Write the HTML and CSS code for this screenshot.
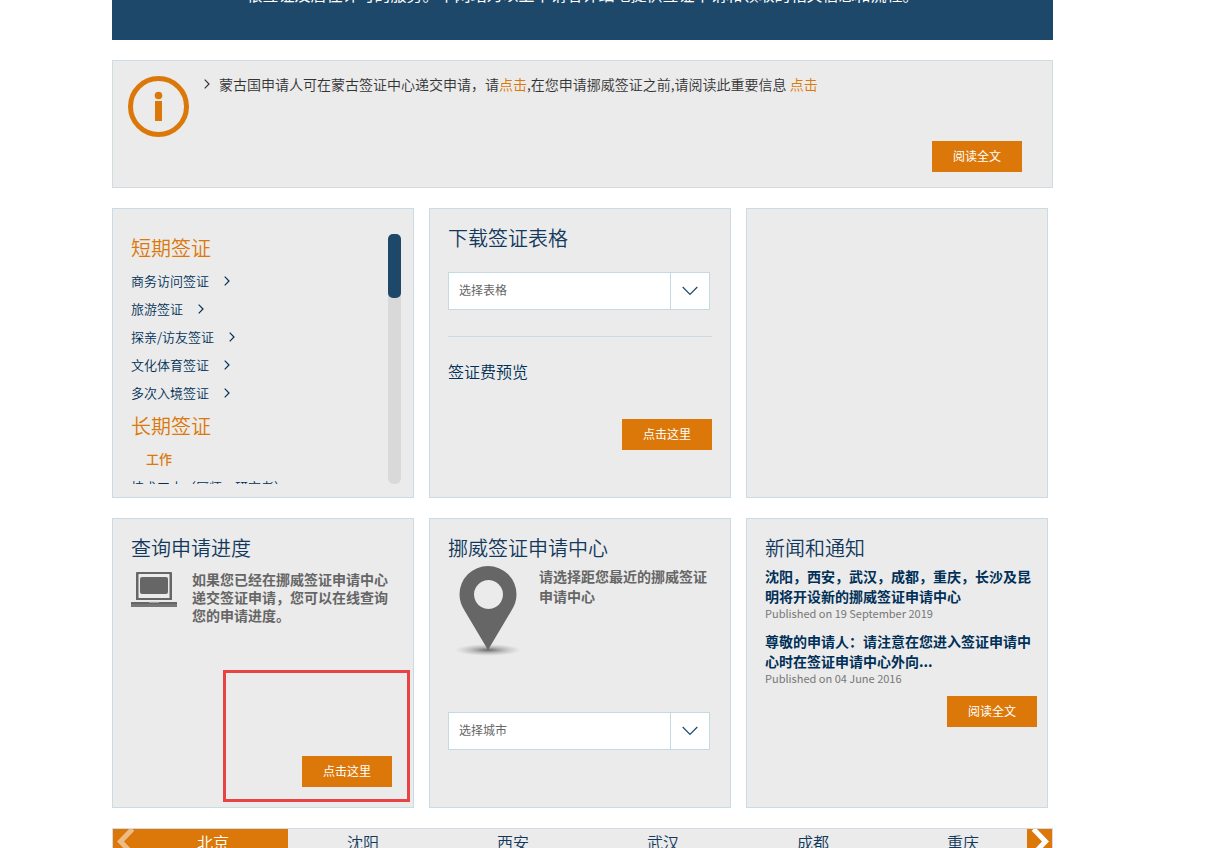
FILE: index.html
```html
<!DOCTYPE html>
<html lang="zh-CN">
<head>
<meta charset="utf-8">
<title>挪威签证申请中心</title>
<link rel="stylesheet" href="styles.css">
</head>
<body>
<main class="page">
  <section class="hero"><p class="hero-text">根签证及居住许可的服务。本网站为以上申请者详细地提供签证申请和领取的相关信息和流程。</p></section>

  <section class="notice">
    <svg class="notice-icon" viewBox="0 0 61 61" aria-hidden="true"><circle cx="30.5" cy="30.5" r="28" fill="none" stroke="#dc7809" stroke-width="5"/><circle cx="30.5" cy="19.5" r="3.8" fill="#dc7809"/><path d="M27 25h7v20h-7z" fill="#dc7809"/></svg>
    <div class="notice-body">
      <p class="notice-text"><svg class="chev" viewBox="0 0 6 10" aria-hidden="true"><path d="M.7.7 5 5 .7 9.300"/></svg><span>蒙古国申请人可在蒙古签证中心递交申请，请<a href="#">点击</a>,在您申请挪威签证之前,请阅读此重要信息 <a href="#">点击</a></span></p>
      <button class="btn" type="button">阅读全文</button>
    </div>
  </section>

  <div class="cards">
    <section class="card card-visas">
      <div class="visa-list">
        <h2 class="group">短期签证</h2>
        <a class="visa" href="#">商务访问签证<svg class="chev" viewBox="0 0 6 10" aria-hidden="true"><path d="M.7.7 5 5 .7 9.300"/></svg></a>
        <a class="visa" href="#">旅游签证<svg class="chev" viewBox="0 0 6 10" aria-hidden="true"><path d="M.7.7 5 5 .7 9.300"/></svg></a>
        <a class="visa" href="#">探亲/访友签证<svg class="chev" viewBox="0 0 6 10" aria-hidden="true"><path d="M.7.7 5 5 .7 9.300"/></svg></a>
        <a class="visa" href="#">文化体育签证<svg class="chev" viewBox="0 0 6 10" aria-hidden="true"><path d="M.7.7 5 5 .7 9.300"/></svg></a>
        <a class="visa" href="#">多次入境签证<svg class="chev" viewBox="0 0 6 10" aria-hidden="true"><path d="M.7.7 5 5 .7 9.300"/></svg></a>
        <h2 class="group">长期签证</h2>
        <h3 class="subgroup">工作</h3>
        <a class="visa" href="#">技术工人（厨师，研究者）</a>
      </div>
      <div class="track"><div class="thumb"></div></div>
    </section>

    <section class="card">
      <h2 class="title">下载签证表格</h2>
      <div class="picker picker-form">
        <select class="picker-select" aria-label="选择表格"><option>选择表格</option></select>
        <span class="picker-arrow"><svg viewBox="0 0 16 10" aria-hidden="true"><path d="M.7 1 8 8.500 15.300 1"/></svg></span>
      </div>
      <h3 class="fee">签证费预览</h3>
      <button class="btn" type="button">点击这里</button>
    </section>

    <section class="card"></section>

    <section class="card">
      <h2 class="title">查询申请进度</h2>
      <div class="row row-track">
        <svg class="laptop" viewBox="0 0 46 36" aria-hidden="true"><path fill="#666" fill-rule="evenodd" d="M6 0h34a1 1 0 0 1 1 1v27H5V1a1 1 0 0 1 1-1zm1.500 2v24h31v-24z"/><rect x="9" y="5" width="28" height="17" rx="2" fill="#666"/><path fill="#666" d="M0 30h46v2H0z"/><path fill="#777" d="M0 32h46v3H0z"/><path fill="#ddd" d="M18 29h10v1.500H18z"/></svg>
        <p class="desc">如果您已经在挪威签证申请中心递交签证申请，您可以在线查询您的申请进度。</p>
      </div>
      <button class="btn btn-bottom" type="button">点击这里</button>
      <div class="highlight"></div>
    </section>

    <section class="card">
      <h2 class="title">挪威签证申请中心</h2>
      <div class="row row-centre">
        <svg class="pin" viewBox="0 0 68 92" aria-hidden="true"><defs><radialGradient id="shade"><stop offset="0" stop-color="#444" stop-opacity=".8"/><stop offset=".5" stop-color="#777" stop-opacity=".4"/><stop offset="1" stop-color="#999" stop-opacity="0"/></radialGradient></defs><ellipse cx="34" cy="84" rx="33" ry="6" fill="url(#shade)"/><path fill="#666" fill-rule="evenodd" d="M34 0a28.500 28.500 0 0 1 28.500 28.500c0 6-2 11-5 16L34 84 10.500 44.500c-3-5-5-10-5-16A28.500 28.500 0 0 1 34 0zm.5 14a14.500 14.500 0 1 0 .01 0z"/></svg>
        <p class="desc">请选择距您最近的挪威签证申请中心</p>
      </div>
      <div class="picker picker-city">
        <select class="picker-select" aria-label="选择城市"><option>选择城市</option></select>
        <span class="picker-arrow"><svg viewBox="0 0 16 10" aria-hidden="true"><path d="M.7 1 8 8.500 15.300 1"/></svg></span>
      </div>
    </section>

    <section class="card card-news">
      <h2 class="title">新闻和通知</h2>
      <article class="news"><a class="news-link" href="#">沈阳，西安，武汉，成都，重庆，长沙及昆明将开设新的挪威签证申请中心</a><p class="date">Published on 19 September 2019</p></article>
      <article class="news"><a class="news-link" href="#">尊敬的申请人：请注意在您进入签证申请中心时在签证申请中心外向...</a><p class="date">Published on 04 June 2016</p></article>
      <button class="btn" type="button">阅读全文</button>
    </section>
  </div>

  <nav class="tabs">
    <button class="nav-arrow prev" type="button" aria-label="上一个"><svg viewBox="0 0 25 30" aria-hidden="true"><path d="M19.500 0 7.500 12.500l12 12.500"/></svg></button>
    <div class="tab-list">
      <button class="tab active" type="button">北京</button>
      <button class="tab" type="button">沈阳</button>
      <button class="tab" type="button">西安</button>
      <button class="tab" type="button">武汉</button>
      <button class="tab" type="button">成都</button>
      <button class="tab" type="button">重庆</button>
    </div>
    <button class="nav-arrow next" type="button" aria-label="下一个"><svg viewBox="0 0 25 30" aria-hidden="true"><path d="M6.500 0l12 12.500-12 12.500"/></svg></button>
  </nav>
</main>
</body>
</html>
```
FILE: styles.css
```css
* { box-sizing: border-box; margin: 0; padding: 0; }
body {
  background: #fff;
  color: #333;
  font-family: "Noto Sans CJK SC", "Noto Sans", sans-serif;
  font-size: 13px;
}
a { color: #dc7809; text-decoration: none; }
button, select { font: inherit; border: 0; border-radius: 0; cursor: pointer; }
.page { padding: 0 164px 0 112px; }

.hero {
  display: flex;
  align-items: flex-end;
  justify-content: center;
  height: 40px;
  padding-bottom: 36px;
  background: #1d486a;
}
.hero-text { color: #fff; font-size: 16px; line-height: 20px; white-space: nowrap; }

.notice {
  display: flex;
  gap: 15px;
  min-height: 128px;
  margin: 20px 0;
  padding: 15px 30px 15px 15px;
  background: #ebebeb;
  border: 1px solid #d2dae2;
}
.notice-icon { flex: none; width: 61px; height: 61px; }
.notice-body { display: flex; flex: 1; flex-direction: column; justify-content: space-between; }
.notice-text { display: flex; align-items: center; gap: 9px; font-size: 14px; font-weight: 350; line-height: 16px; }
.chev { flex: none; width: 6px; height: 10px; fill: none; stroke: currentColor; stroke-width: 1.2; }

.btn {
  align-self: flex-end;
  min-width: 90px;
  height: 31px;
  padding-bottom: 2px;
  background: #dc7809;
  color: #fff;
  font-size: 12px;
  line-height: 29px;
}

.cards { display: grid; grid-template-columns: repeat(3, 1fr); gap: 20px 15px; padding-right: 5px; }
.card {
  position: relative;
  display: flex;
  flex-direction: column;
  min-height: 290px;
  padding: 14px 18px;
  background: #ebebeb;
  border: 1px solid #c9dbe5;
}
.title { color: #12395c; font-size: 20px; font-weight: 350; line-height: 30px; }

.card-visas { flex-direction: row; padding: 25px 12px 13px 18px; }
.visa-list { flex: 1; height: 250px; overflow: hidden; }
.group { color: #dc7809; font-size: 20px; font-weight: 350; line-height: 28px; margin-bottom: 5px; }
.visa { display: flex; align-items: center; gap: 15px; height: 28px; color: #003057; font-weight: 350; line-height: 28px; }
.visa + .group { margin-top: 5px; }
.subgroup { padding-left: 15px; color: #dc7809; font-size: 13px; font-weight: 500; line-height: 28px; }
.track { width: 13px; height: 250px; border-radius: 6px; background: #d9d9d9; }
.thumb { height: 64px; border-radius: 5px; background: #1d486a; }

.picker {
  display: flex;
  height: 38px;
  margin-right: 2px;
  background: #fff;
  border: 1px solid #c5d9e0;
}
.picker-form { margin-top: 19px; }
.picker-city { margin-top: 54px; }
.picker-select {
  flex: 1;
  padding: 0 10px 4px;
  appearance: none;
  background: transparent;
  color: #666;
  font-size: 12px;
}
.picker-arrow { display: grid; place-items: center; width: 39px; border-left: 1px solid #c5d9e0; }
.picker-arrow svg { width: 16px; height: 10px; fill: none; stroke: #1d486a; stroke-width: 1.2; }
.fee {
  margin: 26px 0 36px;
  padding-top: 22px;
  border-top: 1px solid #cbd9e2;
  color: #003057;
  font-size: 16px;
  font-weight: 350;
  line-height: 24px;
}

.row { display: flex; }
.desc { flex: 1; color: #666; font-size: 14px; font-weight: 700; line-height: 20px; }
.row-track { gap: 15px; padding-top: 7px; }
.row-track .desc { line-height: 18px; }
.row-centre { gap: 17px; padding: 3px 4px 0 6px; }
.laptop { flex: none; width: 46px; height: 36px; margin-top: 2px; }
.pin { flex: none; width: 68px; height: 92px; }
.btn-bottom { margin: auto 3px 6px 0; }
.highlight { position: absolute; right: 3px; bottom: 5px; width: 187px; height: 132px; border: 3px solid #e84343; pointer-events: none; }

.card-news { padding-right: 10px; }
.news { padding-right: 4px; margin-bottom: 10px; }
.news-link { display: block; color: #003057; font-size: 14px; font-weight: 700; line-height: 20px; }
.title + .news { padding-top: 3px; }
.date { color: #777; font-size: 11px; line-height: 15px; }

.tabs {
  display: flex;
  height: 44px;
  margin-top: 20px;
  overflow: hidden;
  background: #ebebeb;
  border: 1px solid #d5dbe3;
}
.nav-arrow { flex: none; width: 25px; background: #dc7809; }
.nav-arrow svg { display: block; width: 25px; height: 30px; margin-bottom: 12px; fill: none; stroke: #fff; stroke-width: 5; }
.prev svg { opacity: 0.5; }
.tab-list { display: flex; flex: 1; min-width: 0; overflow: hidden; }
.tab { flex: 0 0 150px; height: 42px; padding-bottom: 16px; background: transparent; color: #12395c; font-size: 16px; font-weight: 350; line-height: 26px; }
.tab.active { background: #dc7809; color: #fff; }
```
